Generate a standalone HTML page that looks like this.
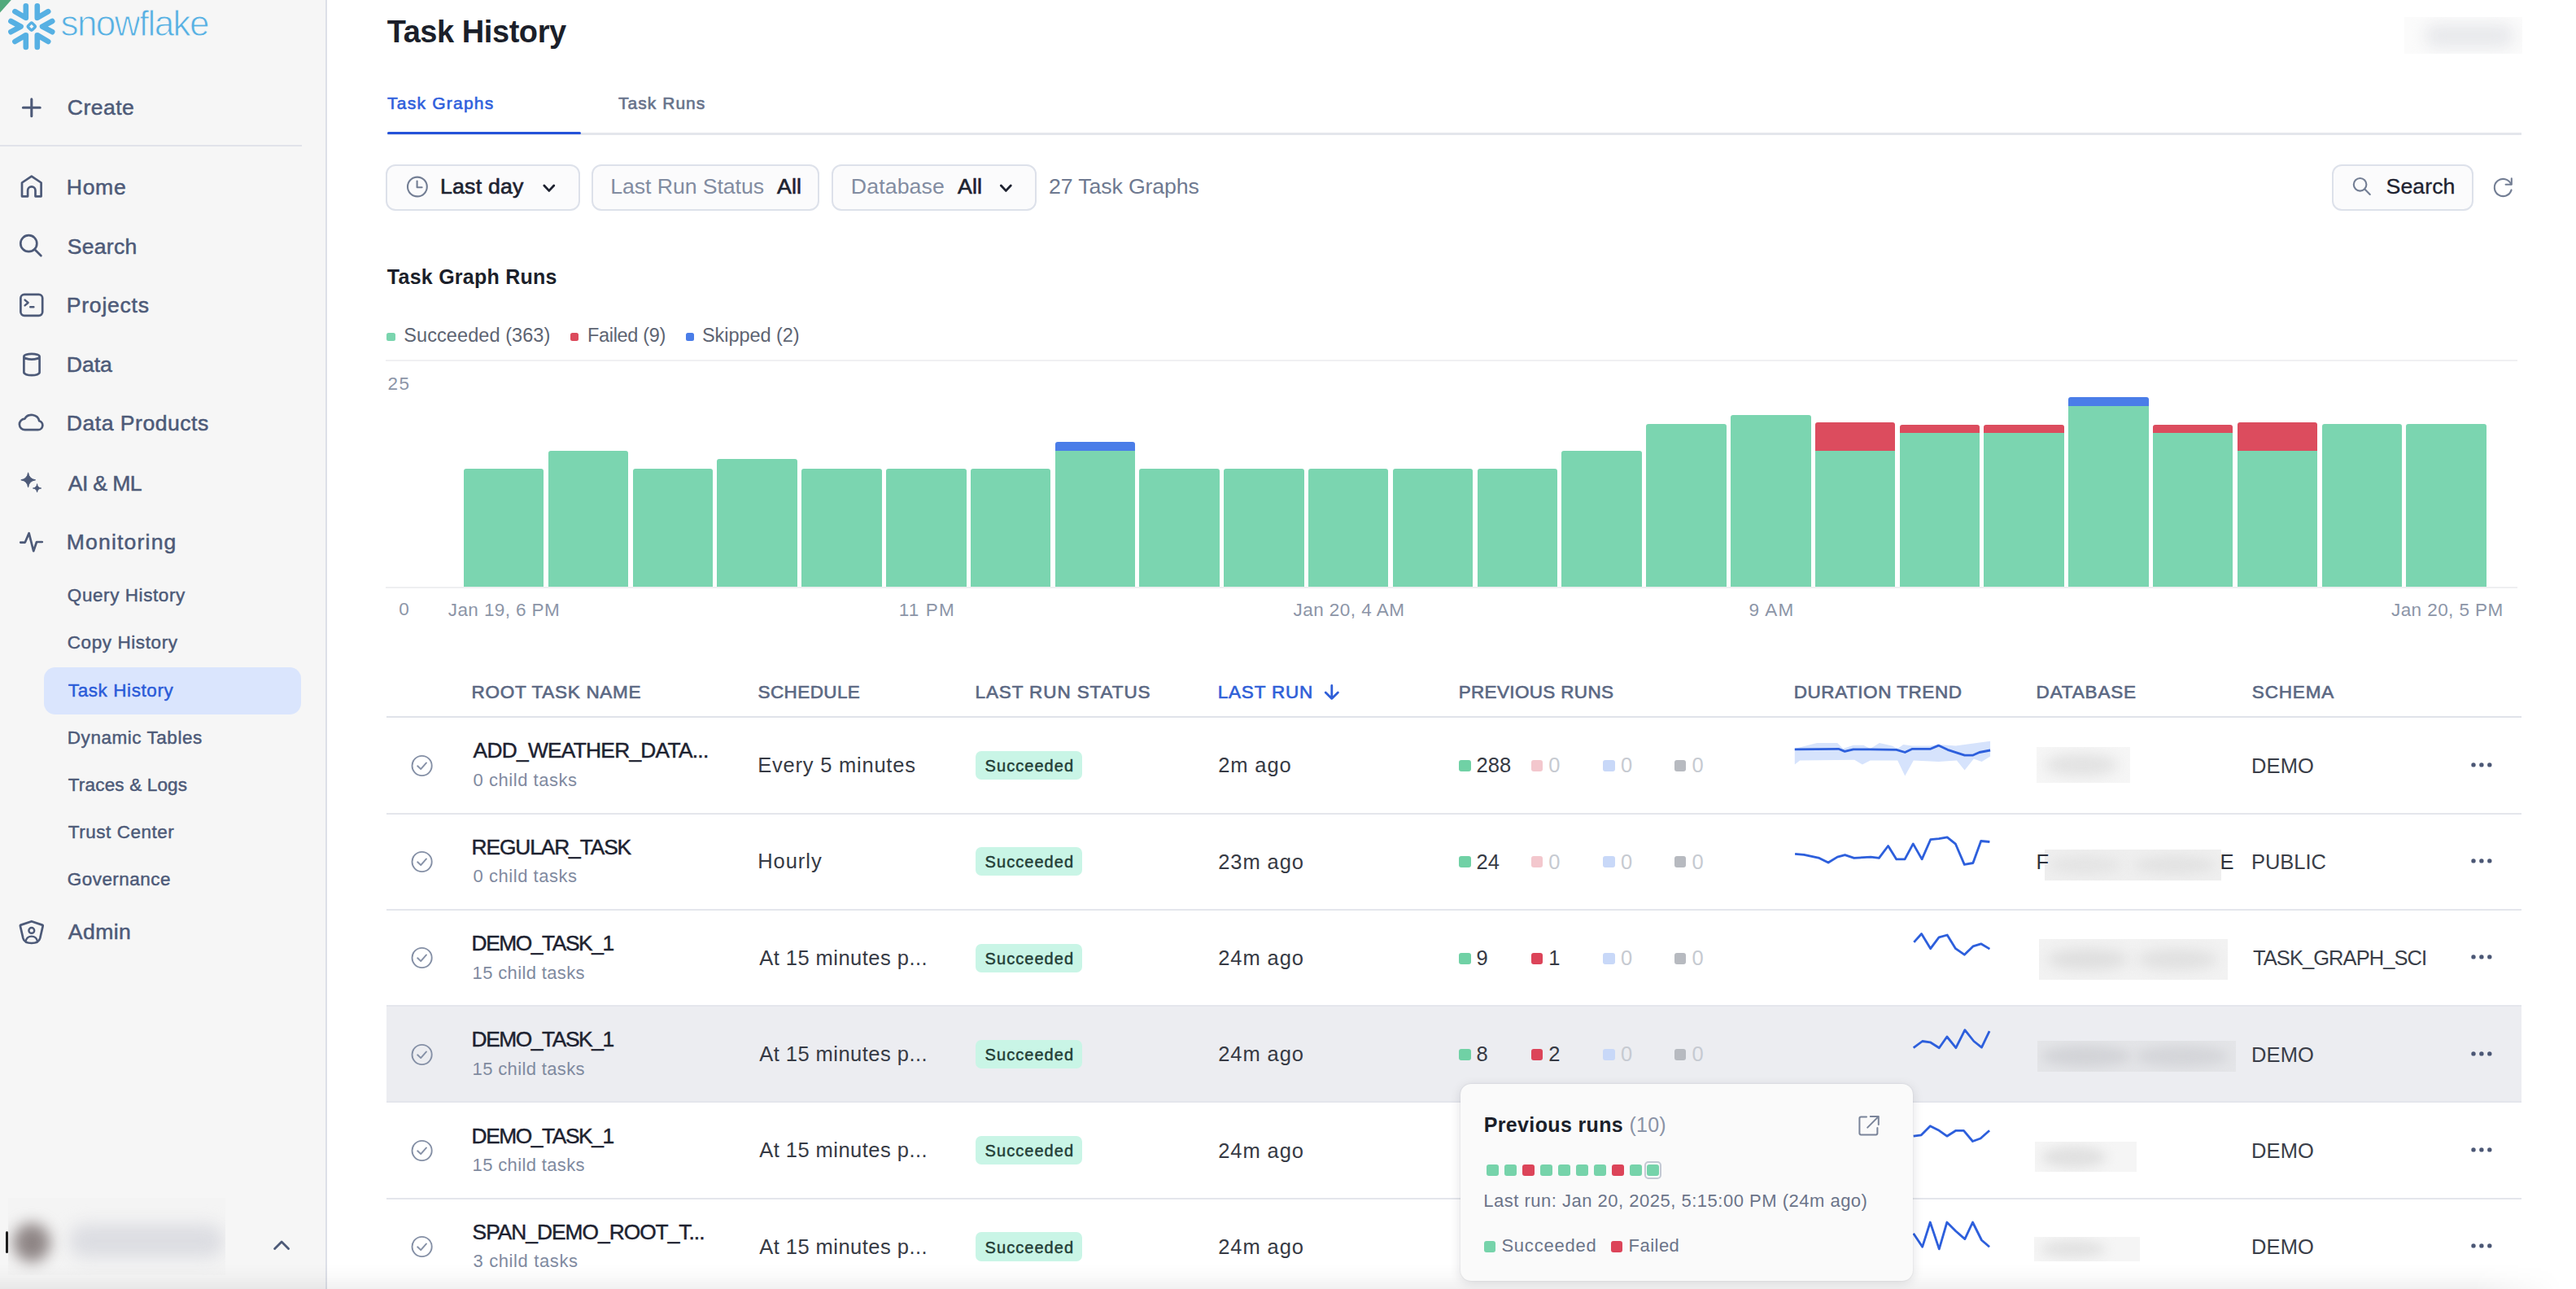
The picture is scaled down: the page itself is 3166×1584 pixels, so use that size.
<!DOCTYPE html>
<html><head><meta charset="utf-8"><style>
html,body{margin:0;padding:0;width:3166px;height:1584px;overflow:hidden;background:#fff;}
body{position:relative;font-family:"Liberation Sans",sans-serif;}
.t{position:absolute;white-space:nowrap;line-height:1.117;}
</style></head><body>
<div style="position:absolute;left:0.00px;top:0.00px;width:400.00px;height:1584.00px;background:#f6f6f6;"></div><div style="position:absolute;left:400.00px;top:0.00px;width:2.00px;height:1584.00px;background:#dde0e8;"></div><div style="position:absolute;left:0.00px;top:177.70px;width:371.00px;height:2.00px;background:#e1e3ea;"></div><div style="position:absolute;left:54.00px;top:820.00px;width:316.30px;height:57.50px;background:#dae5fd;border-radius:14px;"></div><div style="position:absolute;left:10px;top:1472px;width:267px;height:95px;background:#f4f4f4;overflow:hidden;"><div style="position:absolute;left:6px;top:31px;width:46px;height:48px;border-radius:50%;background:#8e8585;filter:blur(9px);"></div><div style="position:absolute;left:75px;top:32px;width:190px;height:42px;border-radius:20px;background:#dcdde2;filter:blur(10px);"></div></div><div style="position:absolute;left:6.50px;top:1513.00px;width:3.00px;height:27.00px;background:#1d1d1d;border-radius:2px;filter:blur(0.5px);"></div><div style="position:absolute;left:2955px;top:20.5px;width:145px;height:45.5px;background:#fbfbfb;overflow:hidden;"><div style="position:absolute;left:25px;top:8px;width:110px;height:30px;border-radius:15px;background:#e8e9ec;filter:blur(9px);"></div></div><div style="position:absolute;left:476.00px;top:163.00px;width:2622.70px;height:3.00px;background:#e4e6ec;"></div><div style="position:absolute;left:476.00px;top:162.00px;width:238.00px;height:3.40px;background:#2452d9;border-radius:2px;"></div><div style="position:absolute;left:474.40px;top:202.00px;width:238.30px;height:57.20px;box-sizing:border-box;border:2px solid #dde1ea;border-radius:12px;background:#fbfbfc;"></div><div style="position:absolute;left:726.70px;top:202.00px;width:280.70px;height:57.20px;box-sizing:border-box;border:2px solid #dde1ea;border-radius:12px;background:#fbfbfc;"></div><div style="position:absolute;left:1022.00px;top:202.00px;width:251.70px;height:57.20px;box-sizing:border-box;border:2px solid #dde1ea;border-radius:12px;background:#fbfbfc;"></div><div style="position:absolute;left:2866.40px;top:202.00px;width:173.40px;height:57.20px;box-sizing:border-box;border:2px solid #dde1ea;border-radius:12px;background:#fbfbfc;"></div><div style="position:absolute;left:474.40px;top:442.00px;width:2620.00px;height:2.00px;background:#f0f0f2;"></div><div style="position:absolute;left:474.00px;top:721.00px;width:2620.00px;height:2.00px;background:#eeeff1;"></div><div style="position:absolute;left:475.00px;top:409.00px;width:10.60px;height:9.60px;background:#7ad5ae;border-radius:2.5px;"></div><div style="position:absolute;left:700.50px;top:409.00px;width:10.60px;height:9.60px;background:#dc4a5c;border-radius:2.5px;"></div><div style="position:absolute;left:842.50px;top:409.00px;width:10.60px;height:9.60px;background:#4a7de8;border-radius:2.5px;"></div><div style="position:absolute;left:570.00px;top:576.00px;width:98.00px;height:145.00px;background:#7bd5b0;border-radius:3px 3px 0 0;"></div><div style="position:absolute;left:674.00px;top:554.00px;width:98.00px;height:167.00px;background:#7bd5b0;border-radius:3px 3px 0 0;"></div><div style="position:absolute;left:778.00px;top:576.00px;width:98.00px;height:145.00px;background:#7bd5b0;border-radius:3px 3px 0 0;"></div><div style="position:absolute;left:881.00px;top:564.00px;width:99.00px;height:157.00px;background:#7bd5b0;border-radius:3px 3px 0 0;"></div><div style="position:absolute;left:985.00px;top:576.00px;width:99.00px;height:145.00px;background:#7bd5b0;border-radius:3px 3px 0 0;"></div><div style="position:absolute;left:1089.00px;top:576.00px;width:99.00px;height:145.00px;background:#7bd5b0;border-radius:3px 3px 0 0;"></div><div style="position:absolute;left:1193.00px;top:576.00px;width:98.00px;height:145.00px;background:#7bd5b0;border-radius:3px 3px 0 0;"></div><div style="position:absolute;left:1297.00px;top:543.00px;width:98.00px;height:13.00px;background:#4a7de8;border-radius:3px 3px 0 0;"></div><div style="position:absolute;left:1297.00px;top:554.00px;width:98.00px;height:167.00px;background:#7bd5b0;"></div><div style="position:absolute;left:1400.00px;top:576.00px;width:99.00px;height:145.00px;background:#7bd5b0;border-radius:3px 3px 0 0;"></div><div style="position:absolute;left:1504.00px;top:576.00px;width:99.00px;height:145.00px;background:#7bd5b0;border-radius:3px 3px 0 0;"></div><div style="position:absolute;left:1608.00px;top:576.00px;width:98.00px;height:145.00px;background:#7bd5b0;border-radius:3px 3px 0 0;"></div><div style="position:absolute;left:1712.00px;top:576.00px;width:98.00px;height:145.00px;background:#7bd5b0;border-radius:3px 3px 0 0;"></div><div style="position:absolute;left:1816.00px;top:576.00px;width:98.00px;height:145.00px;background:#7bd5b0;border-radius:3px 3px 0 0;"></div><div style="position:absolute;left:1919.00px;top:554.00px;width:99.00px;height:167.00px;background:#7bd5b0;border-radius:3px 3px 0 0;"></div><div style="position:absolute;left:2023.00px;top:521.00px;width:99.00px;height:200.00px;background:#7bd5b0;border-radius:3px 3px 0 0;"></div><div style="position:absolute;left:2127.00px;top:510.00px;width:99.00px;height:211.00px;background:#7bd5b0;border-radius:3px 3px 0 0;"></div><div style="position:absolute;left:2231.00px;top:519.00px;width:98.00px;height:37.00px;background:#dc4c5e;border-radius:3px 3px 0 0;"></div><div style="position:absolute;left:2231.00px;top:554.00px;width:98.00px;height:167.00px;background:#7bd5b0;"></div><div style="position:absolute;left:2335.00px;top:522.00px;width:98.00px;height:12.00px;background:#dc4c5e;border-radius:3px 3px 0 0;"></div><div style="position:absolute;left:2335.00px;top:532.00px;width:98.00px;height:189.00px;background:#7bd5b0;"></div><div style="position:absolute;left:2438.00px;top:522.00px;width:99.00px;height:12.00px;background:#dc4c5e;border-radius:3px 3px 0 0;"></div><div style="position:absolute;left:2438.00px;top:532.00px;width:99.00px;height:189.00px;background:#7bd5b0;"></div><div style="position:absolute;left:2542.00px;top:488.00px;width:99.00px;height:13.00px;background:#4a7de8;border-radius:3px 3px 0 0;"></div><div style="position:absolute;left:2542.00px;top:499.00px;width:99.00px;height:222.00px;background:#7bd5b0;"></div><div style="position:absolute;left:2646.00px;top:522.00px;width:98.00px;height:12.00px;background:#dc4c5e;border-radius:3px 3px 0 0;"></div><div style="position:absolute;left:2646.00px;top:532.00px;width:98.00px;height:189.00px;background:#7bd5b0;"></div><div style="position:absolute;left:2750.00px;top:519.00px;width:98.00px;height:37.00px;background:#dc4c5e;border-radius:3px 3px 0 0;"></div><div style="position:absolute;left:2750.00px;top:554.00px;width:98.00px;height:167.00px;background:#7bd5b0;"></div><div style="position:absolute;left:2854.00px;top:521.00px;width:98.00px;height:200.00px;background:#7bd5b0;border-radius:3px 3px 0 0;"></div><div style="position:absolute;left:2957.00px;top:521.00px;width:99.00px;height:200.00px;background:#7bd5b0;border-radius:3px 3px 0 0;"></div><div style="position:absolute;left:474.90px;top:1236.00px;width:2623.80px;height:119.00px;background:#ecedf1;"></div><div style="position:absolute;left:474.90px;top:880.00px;width:2623.80px;height:2.00px;background:#e0e3ea;"></div><div style="position:absolute;left:474.90px;top:998.50px;width:2623.80px;height:2.00px;background:#e4e6ec;"></div><div style="position:absolute;left:474.90px;top:1116.80px;width:2623.80px;height:2.00px;background:#e4e6ec;"></div><div style="position:absolute;left:474.90px;top:1235.10px;width:2623.80px;height:2.00px;background:#e4e6ec;"></div><div style="position:absolute;left:474.90px;top:1353.40px;width:2623.80px;height:2.00px;background:#e4e6ec;"></div><div style="position:absolute;left:474.90px;top:1471.70px;width:2623.80px;height:2.00px;background:#e4e6ec;"></div><div style="position:absolute;left:1198.50px;top:922.90px;width:131.00px;height:35.30px;background:#c9f5e6;border-radius:7px;"></div><div style="position:absolute;left:1793.00px;top:934.00px;width:14.60px;height:14.20px;background:#70d1a5;border-radius:3px;"></div><div style="position:absolute;left:1881.70px;top:934.00px;width:14.60px;height:14.20px;background:#f3c7cd;border-radius:3px;"></div><div style="position:absolute;left:1970.30px;top:934.00px;width:14.60px;height:14.20px;background:#c8d8f8;border-radius:3px;"></div><div style="position:absolute;left:2057.80px;top:934.00px;width:14.60px;height:14.20px;background:#b7bac0;border-radius:3px;"></div><div style="position:absolute;left:1198.50px;top:1041.20px;width:131.00px;height:35.30px;background:#c9f5e6;border-radius:7px;"></div><div style="position:absolute;left:1793.00px;top:1052.30px;width:14.60px;height:14.20px;background:#70d1a5;border-radius:3px;"></div><div style="position:absolute;left:1881.70px;top:1052.30px;width:14.60px;height:14.20px;background:#f3c7cd;border-radius:3px;"></div><div style="position:absolute;left:1970.30px;top:1052.30px;width:14.60px;height:14.20px;background:#c8d8f8;border-radius:3px;"></div><div style="position:absolute;left:2057.80px;top:1052.30px;width:14.60px;height:14.20px;background:#b7bac0;border-radius:3px;"></div><div style="position:absolute;left:1198.50px;top:1159.50px;width:131.00px;height:35.30px;background:#c9f5e6;border-radius:7px;"></div><div style="position:absolute;left:1793.00px;top:1170.60px;width:14.60px;height:14.20px;background:#70d1a5;border-radius:3px;"></div><div style="position:absolute;left:1881.70px;top:1170.60px;width:14.60px;height:14.20px;background:#dc4459;border-radius:3px;"></div><div style="position:absolute;left:1970.30px;top:1170.60px;width:14.60px;height:14.20px;background:#c8d8f8;border-radius:3px;"></div><div style="position:absolute;left:2057.80px;top:1170.60px;width:14.60px;height:14.20px;background:#b7bac0;border-radius:3px;"></div><div style="position:absolute;left:1198.50px;top:1277.80px;width:131.00px;height:35.30px;background:#c9f5e6;border-radius:7px;"></div><div style="position:absolute;left:1793.00px;top:1288.90px;width:14.60px;height:14.20px;background:#70d1a5;border-radius:3px;"></div><div style="position:absolute;left:1881.70px;top:1288.90px;width:14.60px;height:14.20px;background:#dc4459;border-radius:3px;"></div><div style="position:absolute;left:1970.30px;top:1288.90px;width:14.60px;height:14.20px;background:#c8d8f8;border-radius:3px;"></div><div style="position:absolute;left:2057.80px;top:1288.90px;width:14.60px;height:14.20px;background:#b7bac0;border-radius:3px;"></div><div style="position:absolute;left:1198.50px;top:1396.10px;width:131.00px;height:35.30px;background:#c9f5e6;border-radius:7px;"></div><div style="position:absolute;left:1198.50px;top:1514.40px;width:131.00px;height:35.30px;background:#c9f5e6;border-radius:7px;"></div><div style="position:absolute;left:2503.3px;top:918.0px;width:114.6px;height:43.6px;background:#f6f6f6;overflow:hidden;"><div style="position:absolute;left:10px;top:8px;width:90px;height:28px;background:#e2e2e2;border-radius:50%;filter:blur(8px);"></div></div><div style="position:absolute;left:2512.8px;top:1043.7px;width:217.2px;height:37.9px;background:#efefef;overflow:hidden;"><div style="position:absolute;left:5px;top:8px;width:90px;height:22px;background:#e4e4e4;border-radius:50%;filter:blur(7px);"></div><div style="position:absolute;left:110px;top:8px;width:100px;height:22px;background:#e2e2e2;border-radius:50%;filter:blur(7px);"></div></div><div style="position:absolute;left:2505.7px;top:1153.7px;width:232.7px;height:50.3px;background:#f2f2f2;overflow:hidden;"><div style="position:absolute;left:10px;top:12px;width:100px;height:26px;background:#dedede;border-radius:50%;filter:blur(8px);"></div><div style="position:absolute;left:120px;top:12px;width:100px;height:26px;background:#e0e0e0;border-radius:50%;filter:blur(8px);"></div></div><div style="position:absolute;left:2504.0px;top:1279.0px;width:244.0px;height:38.3px;background:#e4e5e8;overflow:hidden;"><div style="position:absolute;left:5px;top:6px;width:110px;height:26px;background:#d2d3d7;border-radius:50%;filter:blur(7px);"></div><div style="position:absolute;left:120px;top:6px;width:115px;height:26px;background:#d4d5d9;border-radius:50%;filter:blur(7px);"></div></div><div style="position:absolute;left:2501.0px;top:1402.6px;width:125.4px;height:37.1px;background:#f5f5f5;overflow:hidden;"><div style="position:absolute;left:8px;top:6px;width:80px;height:26px;background:#e0e0e0;border-radius:50%;filter:blur(7px);"></div></div><div style="position:absolute;left:2500.4px;top:1519.6px;width:129.6px;height:30.4px;background:#f5f5f5;overflow:hidden;"><div style="position:absolute;left:8px;top:4px;width:80px;height:22px;background:#e2e2e2;border-radius:50%;filter:blur(7px);"></div></div><div style="position:absolute;left:1795px;top:1332px;width:555.7px;height:242.4px;background:#fafafa;border-radius:13px;box-shadow:0 3px 14px rgba(20,25,40,0.13),0 0 2px rgba(20,25,40,0.12);z-index:70;"></div><div style="position:absolute;left:1827.3px;top:1430.7px;width:15px;height:14px;background:#76d3aa;border-radius:3px;z-index:80;"></div><div style="position:absolute;left:1849.2px;top:1430.7px;width:15px;height:14px;background:#76d3aa;border-radius:3px;z-index:80;"></div><div style="position:absolute;left:1871.1px;top:1430.7px;width:15px;height:14px;background:#dc4459;border-radius:3px;z-index:80;"></div><div style="position:absolute;left:1893.0px;top:1430.7px;width:15px;height:14px;background:#76d3aa;border-radius:3px;z-index:80;"></div><div style="position:absolute;left:1914.9px;top:1430.7px;width:15px;height:14px;background:#76d3aa;border-radius:3px;z-index:80;"></div><div style="position:absolute;left:1936.8px;top:1430.7px;width:15px;height:14px;background:#76d3aa;border-radius:3px;z-index:80;"></div><div style="position:absolute;left:1958.7px;top:1430.7px;width:15px;height:14px;background:#76d3aa;border-radius:3px;z-index:80;"></div><div style="position:absolute;left:1980.6px;top:1430.7px;width:15px;height:14px;background:#dc4459;border-radius:3px;z-index:80;"></div><div style="position:absolute;left:2002.5px;top:1430.7px;width:15px;height:14px;background:#76d3aa;border-radius:3px;z-index:80;"></div><div style="position:absolute;left:2024.4px;top:1430.7px;width:15px;height:14px;background:#76d3aa;border-radius:3px;z-index:80;"></div><div style="position:absolute;left:2020.6px;top:1426.5px;width:21.4px;height:22px;box-sizing:border-box;border:2px solid #c3c8d3;border-radius:5px;z-index:80;"></div><div style="position:absolute;left:1824.3px;top:1524.8px;width:14px;height:14.6px;background:#76d3aa;border-radius:3px;z-index:80;"></div><div style="position:absolute;left:1980.3px;top:1524.8px;width:14px;height:14.6px;background:#dc4459;border-radius:3px;z-index:80;"></div>
<div class="t" style="left:2502.5px;top:1045.02px;font-size:25.5px;color:#2e323c;">F</div><div class="t" style="left:2728.6px;top:1045.02px;font-size:25.5px;color:#2e323c;">E</div>
<div class="t" style="left:82.80px;top:118.33px;font-size:26.6px;color:#4d5a78;letter-spacing:0.434px;-webkit-text-stroke:0.5px #4d5a78;">Create</div><div class="t" style="left:81.80px;top:215.93px;font-size:26.6px;color:#4d5a78;letter-spacing:0.651px;-webkit-text-stroke:0.5px #4d5a78;">Home</div><div class="t" style="left:82.80px;top:288.73px;font-size:26.6px;color:#4d5a78;letter-spacing:0.246px;-webkit-text-stroke:0.5px #4d5a78;">Search</div><div class="t" style="left:81.80px;top:361.33px;font-size:26.6px;color:#4d5a78;letter-spacing:0.733px;-webkit-text-stroke:0.5px #4d5a78;">Projects</div><div class="t" style="left:81.80px;top:433.63px;font-size:26.6px;color:#4d5a78;letter-spacing:-0.061px;-webkit-text-stroke:0.5px #4d5a78;">Data</div><div class="t" style="left:81.80px;top:505.93px;font-size:26.6px;color:#4d5a78;letter-spacing:0.499px;-webkit-text-stroke:0.5px #4d5a78;">Data Products</div><div class="t" style="left:83.80px;top:579.73px;font-size:26.6px;color:#4d5a78;letter-spacing:-0.649px;-webkit-text-stroke:0.5px #4d5a78;">AI &amp; ML</div><div class="t" style="left:81.80px;top:651.93px;font-size:26.6px;color:#4d5a78;letter-spacing:1.158px;-webkit-text-stroke:0.5px #4d5a78;">Monitoring</div><div class="t" style="left:83.80px;top:1131.23px;font-size:26.6px;color:#4d5a78;letter-spacing:0.403px;-webkit-text-stroke:0.5px #4d5a78;">Admin</div><div class="t" style="left:82.80px;top:718.94px;font-size:22.5px;color:#4d5a78;letter-spacing:0.577px;-webkit-text-stroke:0.45px #4d5a78;">Query History</div><div class="t" style="left:82.80px;top:777.04px;font-size:22.5px;color:#4d5a78;letter-spacing:0.579px;-webkit-text-stroke:0.45px #4d5a78;">Copy History</div><div class="t" style="left:83.80px;top:835.64px;font-size:22.5px;color:#2a5bd8;letter-spacing:0.585px;-webkit-text-stroke:0.45px #2a5bd8;">Task History</div><div class="t" style="left:82.80px;top:893.64px;font-size:22.5px;color:#4d5a78;letter-spacing:0.542px;-webkit-text-stroke:0.45px #4d5a78;">Dynamic Tables</div><div class="t" style="left:83.80px;top:951.94px;font-size:22.5px;color:#4d5a78;letter-spacing:0.168px;-webkit-text-stroke:0.45px #4d5a78;">Traces &amp; Logs</div><div class="t" style="left:83.80px;top:1009.94px;font-size:22.5px;color:#4d5a78;letter-spacing:0.527px;-webkit-text-stroke:0.45px #4d5a78;">Trust Center</div><div class="t" style="left:82.80px;top:1068.14px;font-size:22.5px;color:#4d5a78;letter-spacing:0.449px;-webkit-text-stroke:0.45px #4d5a78;">Governance</div><div class="t" style="left:74.50px;top:4.18px;font-size:44px;color:#56b0e3;letter-spacing:-1.586px;-webkit-text-stroke:0.9px #f6f6f6;">snowflake</div><div class="t" style="left:475.70px;top:18.01px;font-size:38px;color:#1b1f2a;letter-spacing:-0.440px;font-weight:700;">Task History</div><div class="t" style="left:476.00px;top:115.00px;font-size:21px;color:#2f5fdc;letter-spacing:1.232px;-webkit-text-stroke:0.6px #2f5fdc;">Task Graphs</div><div class="t" style="left:760.00px;top:115.00px;font-size:21px;color:#66728a;letter-spacing:1.033px;-webkit-text-stroke:0.6px #66728a;">Task Runs</div><div class="t" style="left:541.00px;top:214.54px;font-size:26.7px;color:#1e2230;letter-spacing:0.208px;-webkit-text-stroke:0.65px #1e2230;">Last day</div><div class="t" style="left:750.30px;top:215.24px;font-size:26.7px;color:#828ca1;letter-spacing:-0.082px;">Last Run Status</div><div class="t" style="left:955.00px;top:215.24px;font-size:26.7px;color:#1e2230;letter-spacing:0.135px;-webkit-text-stroke:0.65px #1e2230;">All</div><div class="t" style="left:1045.80px;top:215.24px;font-size:26.7px;color:#828ca1;letter-spacing:0.114px;">Database</div><div class="t" style="left:1177.00px;top:215.24px;font-size:26.7px;color:#1e2230;letter-spacing:0.135px;-webkit-text-stroke:0.65px #1e2230;">All</div><div class="t" style="left:1289.00px;top:215.24px;font-size:26.7px;color:#6e7990;letter-spacing:-0.120px;">27 Task Graphs</div><div class="t" style="left:2932.50px;top:215.14px;font-size:26.7px;color:#1e2230;letter-spacing:0.077px;-webkit-text-stroke:0.3px #1e2230;">Search</div><div class="t" style="left:475.80px;top:327.38px;font-size:25px;color:#1b1f2a;letter-spacing:0.255px;font-weight:700;">Task Graph Runs</div><div class="t" style="left:496.30px;top:399.33px;font-size:23.5px;color:#5d6472;letter-spacing:0.075px;">Succeeded (363)</div><div class="t" style="left:722.00px;top:399.33px;font-size:23.5px;color:#5d6472;letter-spacing:-0.314px;">Failed (9)</div><div class="t" style="left:863.00px;top:399.33px;font-size:23.5px;color:#5d6472;letter-spacing:-0.055px;">Skipped (2)</div><div class="t" style="left:476.50px;top:458.64px;font-size:22.5px;color:#8c95a7;letter-spacing:1.587px;">25</div><div class="t" style="left:490.30px;top:736.04px;font-size:22.5px;color:#8c95a7;letter-spacing:0.000px;">0</div><div class="t" style="left:550.80px;top:736.64px;font-size:22.5px;color:#8c95a7;letter-spacing:0.397px;">Jan 19, 6 PM</div><div class="t" style="left:1104.80px;top:736.64px;font-size:22.5px;color:#8c95a7;letter-spacing:1.146px;">11 PM</div><div class="t" style="left:1589.50px;top:736.64px;font-size:22.5px;color:#8c95a7;letter-spacing:0.461px;">Jan 20, 4 AM</div><div class="t" style="left:2149.60px;top:736.64px;font-size:22.5px;color:#8c95a7;letter-spacing:1.109px;">9 AM</div><div class="t" style="left:2939.00px;top:736.64px;font-size:22.5px;color:#8c95a7;letter-spacing:0.425px;">Jan 20, 5 PM</div><div class="t" style="left:579.60px;top:838.44px;font-size:22.5px;color:#5b6883;letter-spacing:0.701px;-webkit-text-stroke:0.65px #5b6883;">ROOT TASK NAME</div><div class="t" style="left:931.60px;top:838.44px;font-size:22.5px;color:#5b6883;letter-spacing:0.382px;-webkit-text-stroke:0.65px #5b6883;">SCHEDULE</div><div class="t" style="left:1198.50px;top:838.44px;font-size:22.5px;color:#5b6883;letter-spacing:0.898px;-webkit-text-stroke:0.65px #5b6883;">LAST RUN STATUS</div><div class="t" style="left:1496.70px;top:838.44px;font-size:22.5px;color:#2f5fd8;letter-spacing:0.826px;-webkit-text-stroke:0.65px #2f5fd8;">LAST RUN</div><div class="t" style="left:1792.70px;top:838.44px;font-size:22.5px;color:#5b6883;letter-spacing:0.335px;-webkit-text-stroke:0.65px #5b6883;">PREVIOUS RUNS</div><div class="t" style="left:2204.80px;top:838.44px;font-size:22.5px;color:#5b6883;letter-spacing:0.536px;-webkit-text-stroke:0.65px #5b6883;">DURATION TREND</div><div class="t" style="left:2502.60px;top:838.44px;font-size:22.5px;color:#5b6883;letter-spacing:0.830px;-webkit-text-stroke:0.65px #5b6883;">DATABASE</div><div class="t" style="left:2767.80px;top:838.44px;font-size:22.5px;color:#5b6883;letter-spacing:0.849px;-webkit-text-stroke:0.65px #5b6883;">SCHEMA</div><div class="t" style="left:581.60px;top:908.40px;font-size:26.3px;color:#1d2230;letter-spacing:-0.714px;-webkit-text-stroke:0.45px #1d2230;">ADD_WEATHER_DATA...</div><div class="t" style="left:581.60px;top:946.99px;font-size:22px;color:#7f8a9f;letter-spacing:0.537px;">0 child tasks</div><div class="t" style="left:931.20px;top:926.02px;font-size:25.5px;color:#363a44;letter-spacing:0.781px;">Every 5 minutes</div><div class="t" style="left:1210.60px;top:930.00px;font-size:20px;color:#233d36;letter-spacing:1.043px;-webkit-text-stroke:0.45px #233d36;">Succeeded</div><div class="t" style="left:1497.20px;top:926.32px;font-size:25.5px;color:#363a44;letter-spacing:0.886px;">2m ago</div><div class="t" style="left:1814.60px;top:926.32px;font-size:25.5px;color:#363a44;letter-spacing:0.000px;">288</div><div class="t" style="left:1903.30px;top:926.32px;font-size:25.5px;color:#c6cad1;letter-spacing:0.000px;">0</div><div class="t" style="left:1991.90px;top:926.32px;font-size:25.5px;color:#c6cad1;letter-spacing:0.000px;">0</div><div class="t" style="left:2079.40px;top:926.32px;font-size:25.5px;color:#c6cad1;letter-spacing:0.000px;">0</div><div class="t" style="left:2767.00px;top:926.72px;font-size:25.5px;color:#3a3e48;letter-spacing:0.112px;">DEMO</div><div class="t" style="left:579.60px;top:1026.70px;font-size:26.3px;color:#1d2230;letter-spacing:-1.086px;-webkit-text-stroke:0.45px #1d2230;">REGULAR_TASK</div><div class="t" style="left:581.60px;top:1065.29px;font-size:22px;color:#7f8a9f;letter-spacing:0.537px;">0 child tasks</div><div class="t" style="left:931.20px;top:1044.32px;font-size:25.5px;color:#363a44;letter-spacing:0.953px;">Hourly</div><div class="t" style="left:1210.60px;top:1048.30px;font-size:20px;color:#233d36;letter-spacing:1.043px;-webkit-text-stroke:0.45px #233d36;">Succeeded</div><div class="t" style="left:1497.20px;top:1044.62px;font-size:25.5px;color:#363a44;letter-spacing:0.924px;">23m ago</div><div class="t" style="left:1814.60px;top:1044.62px;font-size:25.5px;color:#363a44;letter-spacing:0.000px;">24</div><div class="t" style="left:1903.30px;top:1044.62px;font-size:25.5px;color:#c6cad1;letter-spacing:0.000px;">0</div><div class="t" style="left:1991.90px;top:1044.62px;font-size:25.5px;color:#c6cad1;letter-spacing:0.000px;">0</div><div class="t" style="left:2079.40px;top:1044.62px;font-size:25.5px;color:#c6cad1;letter-spacing:0.000px;">0</div><div class="t" style="left:2767.00px;top:1045.02px;font-size:25.5px;color:#3a3e48;letter-spacing:-0.040px;">PUBLIC</div><div class="t" style="left:579.60px;top:1145.00px;font-size:26.3px;color:#1d2230;letter-spacing:-1.407px;-webkit-text-stroke:0.45px #1d2230;">DEMO_TASK_1</div><div class="t" style="left:580.60px;top:1183.59px;font-size:22px;color:#7f8a9f;letter-spacing:0.362px;">15 child tasks</div><div class="t" style="left:933.20px;top:1162.62px;font-size:25.5px;color:#363a44;letter-spacing:0.468px;">At 15 minutes p...</div><div class="t" style="left:1210.60px;top:1166.60px;font-size:20px;color:#233d36;letter-spacing:1.043px;-webkit-text-stroke:0.45px #233d36;">Succeeded</div><div class="t" style="left:1497.20px;top:1162.92px;font-size:25.5px;color:#363a44;letter-spacing:0.924px;">24m ago</div><div class="t" style="left:1814.60px;top:1162.92px;font-size:25.5px;color:#363a44;letter-spacing:0.000px;">9</div><div class="t" style="left:1903.30px;top:1162.92px;font-size:25.5px;color:#363a44;letter-spacing:0.000px;">1</div><div class="t" style="left:1991.90px;top:1162.92px;font-size:25.5px;color:#c6cad1;letter-spacing:0.000px;">0</div><div class="t" style="left:2079.40px;top:1162.92px;font-size:25.5px;color:#c6cad1;letter-spacing:0.000px;">0</div><div class="t" style="left:2769.00px;top:1163.32px;font-size:25.5px;color:#3a3e48;letter-spacing:-0.937px;width:215px;overflow:hidden;">TASK_GRAPH_SCI</div><div class="t" style="left:579.60px;top:1263.30px;font-size:26.3px;color:#1d2230;letter-spacing:-1.407px;-webkit-text-stroke:0.45px #1d2230;">DEMO_TASK_1</div><div class="t" style="left:580.60px;top:1301.89px;font-size:22px;color:#7f8a9f;letter-spacing:0.362px;">15 child tasks</div><div class="t" style="left:933.20px;top:1280.92px;font-size:25.5px;color:#363a44;letter-spacing:0.468px;">At 15 minutes p...</div><div class="t" style="left:1210.60px;top:1284.90px;font-size:20px;color:#233d36;letter-spacing:1.043px;-webkit-text-stroke:0.45px #233d36;">Succeeded</div><div class="t" style="left:1497.20px;top:1281.22px;font-size:25.5px;color:#363a44;letter-spacing:0.924px;">24m ago</div><div class="t" style="left:1814.60px;top:1281.22px;font-size:25.5px;color:#363a44;letter-spacing:0.000px;">8</div><div class="t" style="left:1903.30px;top:1281.22px;font-size:25.5px;color:#363a44;letter-spacing:0.000px;">2</div><div class="t" style="left:1991.90px;top:1281.22px;font-size:25.5px;color:#c6cad1;letter-spacing:0.000px;">0</div><div class="t" style="left:2079.40px;top:1281.22px;font-size:25.5px;color:#c6cad1;letter-spacing:0.000px;">0</div><div class="t" style="left:2767.00px;top:1281.62px;font-size:25.5px;color:#3a3e48;letter-spacing:0.112px;">DEMO</div><div class="t" style="left:579.60px;top:1381.60px;font-size:26.3px;color:#1d2230;letter-spacing:-1.407px;-webkit-text-stroke:0.45px #1d2230;">DEMO_TASK_1</div><div class="t" style="left:580.60px;top:1420.19px;font-size:22px;color:#7f8a9f;letter-spacing:0.362px;">15 child tasks</div><div class="t" style="left:933.20px;top:1399.22px;font-size:25.5px;color:#363a44;letter-spacing:0.468px;">At 15 minutes p...</div><div class="t" style="left:1210.60px;top:1403.20px;font-size:20px;color:#233d36;letter-spacing:1.043px;-webkit-text-stroke:0.45px #233d36;">Succeeded</div><div class="t" style="left:1497.20px;top:1399.52px;font-size:25.5px;color:#363a44;letter-spacing:0.924px;">24m ago</div><div class="t" style="left:2767.00px;top:1399.92px;font-size:25.5px;color:#3a3e48;letter-spacing:0.112px;">DEMO</div><div class="t" style="left:580.60px;top:1499.90px;font-size:26.3px;color:#1d2230;letter-spacing:-0.975px;-webkit-text-stroke:0.45px #1d2230;">SPAN_DEMO_ROOT_T...</div><div class="t" style="left:581.60px;top:1538.49px;font-size:22px;color:#7f8a9f;letter-spacing:0.612px;">3 child tasks</div><div class="t" style="left:933.20px;top:1517.52px;font-size:25.5px;color:#363a44;letter-spacing:0.468px;">At 15 minutes p...</div><div class="t" style="left:1210.60px;top:1521.50px;font-size:20px;color:#233d36;letter-spacing:1.043px;-webkit-text-stroke:0.45px #233d36;">Succeeded</div><div class="t" style="left:1497.20px;top:1517.82px;font-size:25.5px;color:#363a44;letter-spacing:0.924px;">24m ago</div><div class="t" style="left:2767.00px;top:1518.22px;font-size:25.5px;color:#3a3e48;letter-spacing:0.112px;">DEMO</div><div class="t" style="left:1823.70px;top:1369.38px;font-size:25px;color:#1b1f2a;letter-spacing:0.357px;font-weight:700;z-index:80;">Previous runs</div><div class="t" style="left:2002.60px;top:1369.38px;font-size:25px;color:#8a93a6;letter-spacing:0.156px;z-index:80;">(10)</div><div class="t" style="left:1823.30px;top:1463.59px;font-size:22px;color:#6b7489;letter-spacing:0.502px;z-index:80;">Last run: Jan 20, 2025, 5:15:00 PM (24m ago)</div><div class="t" style="left:1845.40px;top:1519.49px;font-size:22px;color:#6b7489;letter-spacing:0.781px;z-index:80;">Succeeded</div><div class="t" style="left:2001.50px;top:1519.49px;font-size:22px;color:#6b7489;letter-spacing:0.483px;z-index:80;">Failed</div>
<svg style="position:absolute;left:500px;top:920.6px;overflow:visible;" width="40" height="40" viewBox="500 920.6 40 40"><circle cx="518.6" cy="940.6" r="12.1" fill="none" stroke="#8590a6" stroke-width="1.9"/><polyline points="513.2,940.9 517.2,944.7 524,937.0" fill="none" stroke="#8590a6" stroke-width="1.9" stroke-linecap="round" stroke-linejoin="round"/></svg><svg style="position:absolute;left:3030px;top:930.6px;overflow:visible;" width="40" height="20" viewBox="3030 930.6 40 20"><circle cx="3040" cy="939.5" r="2.7" fill="#4b5775"/><circle cx="3049.9" cy="939.5" r="2.7" fill="#4b5775"/><circle cx="3059.8" cy="939.5" r="2.7" fill="#4b5775"/></svg><svg style="position:absolute;left:500px;top:1038.9px;overflow:visible;" width="40" height="40" viewBox="500 1038.9 40 40"><circle cx="518.6" cy="1058.9" r="12.1" fill="none" stroke="#8590a6" stroke-width="1.9"/><polyline points="513.2,1059.2 517.2,1063.0 524,1055.3000000000002" fill="none" stroke="#8590a6" stroke-width="1.9" stroke-linecap="round" stroke-linejoin="round"/></svg><svg style="position:absolute;left:3030px;top:1048.9px;overflow:visible;" width="40" height="20" viewBox="3030 1048.9 40 20"><circle cx="3040" cy="1057.8000000000002" r="2.7" fill="#4b5775"/><circle cx="3049.9" cy="1057.8000000000002" r="2.7" fill="#4b5775"/><circle cx="3059.8" cy="1057.8000000000002" r="2.7" fill="#4b5775"/></svg><svg style="position:absolute;left:500px;top:1157.2px;overflow:visible;" width="40" height="40" viewBox="500 1157.2 40 40"><circle cx="518.6" cy="1177.2" r="12.1" fill="none" stroke="#8590a6" stroke-width="1.9"/><polyline points="513.2,1177.5 517.2,1181.3 524,1173.6000000000001" fill="none" stroke="#8590a6" stroke-width="1.9" stroke-linecap="round" stroke-linejoin="round"/></svg><svg style="position:absolute;left:3030px;top:1167.2px;overflow:visible;" width="40" height="20" viewBox="3030 1167.2 40 20"><circle cx="3040" cy="1176.1000000000001" r="2.7" fill="#4b5775"/><circle cx="3049.9" cy="1176.1000000000001" r="2.7" fill="#4b5775"/><circle cx="3059.8" cy="1176.1000000000001" r="2.7" fill="#4b5775"/></svg><svg style="position:absolute;left:500px;top:1275.5px;overflow:visible;" width="40" height="40" viewBox="500 1275.5 40 40"><circle cx="518.6" cy="1295.5" r="12.1" fill="none" stroke="#8590a6" stroke-width="1.9"/><polyline points="513.2,1295.8 517.2,1299.6 524,1291.9" fill="none" stroke="#8590a6" stroke-width="1.9" stroke-linecap="round" stroke-linejoin="round"/></svg><svg style="position:absolute;left:3030px;top:1285.5px;overflow:visible;" width="40" height="20" viewBox="3030 1285.5 40 20"><circle cx="3040" cy="1294.4" r="2.7" fill="#4b5775"/><circle cx="3049.9" cy="1294.4" r="2.7" fill="#4b5775"/><circle cx="3059.8" cy="1294.4" r="2.7" fill="#4b5775"/></svg><svg style="position:absolute;left:500px;top:1393.8px;overflow:visible;" width="40" height="40" viewBox="500 1393.8 40 40"><circle cx="518.6" cy="1413.8" r="12.1" fill="none" stroke="#8590a6" stroke-width="1.9"/><polyline points="513.2,1414.1 517.2,1417.8999999999999 524,1410.2" fill="none" stroke="#8590a6" stroke-width="1.9" stroke-linecap="round" stroke-linejoin="round"/></svg><svg style="position:absolute;left:3030px;top:1403.8px;overflow:visible;" width="40" height="20" viewBox="3030 1403.8 40 20"><circle cx="3040" cy="1412.7" r="2.7" fill="#4b5775"/><circle cx="3049.9" cy="1412.7" r="2.7" fill="#4b5775"/><circle cx="3059.8" cy="1412.7" r="2.7" fill="#4b5775"/></svg><svg style="position:absolute;left:500px;top:1512.1px;overflow:visible;" width="40" height="40" viewBox="500 1512.1 40 40"><circle cx="518.6" cy="1532.1" r="12.1" fill="none" stroke="#8590a6" stroke-width="1.9"/><polyline points="513.2,1532.3999999999999 517.2,1536.1999999999998 524,1528.5" fill="none" stroke="#8590a6" stroke-width="1.9" stroke-linecap="round" stroke-linejoin="round"/></svg><svg style="position:absolute;left:3030px;top:1522.1px;overflow:visible;" width="40" height="20" viewBox="3030 1522.1 40 20"><circle cx="3040" cy="1531.0" r="2.7" fill="#4b5775"/><circle cx="3049.9" cy="1531.0" r="2.7" fill="#4b5775"/><circle cx="3059.8" cy="1531.0" r="2.7" fill="#4b5775"/></svg><svg style="position:absolute;left:2190px;top:890px;overflow:visible;" width="270" height="80" viewBox="2190 890 270 80"><polygon points="2205.8,919.9 2233.1,912.9 2258.2,912.9 2265.2,919.9 2277.8,915.7 2290.3,915.7 2298.7,919.9 2309.9,912.9 2325.3,916.4 2332.2,919.9 2339.2,915.0 2350.4,916.4 2372.7,916.4 2383.9,915.0 2403.5,916.4 2446.1,910.8 2446.1,929.6 2435.6,935.9 2425.8,932.4 2414.6,946.4 2404.9,934.5 2382.5,935.9 2351.8,934.5 2341.3,953.4 2332.2,934.5 2298.7,934.5 2288.9,939.4 2279.2,933.8 2212.1,934.5 2205.8,939.4" fill="#d6e3fc"/><polyline points="2205.8,920.8 2259.6,920.3 2267.3,923.4 2277.8,920.8 2298.7,920.8 2330.8,921.3 2341.3,924.5 2350.4,920.3 2372.7,920.3 2382.5,916.1 2393.7,921.3 2414.6,928.2 2424.4,928.2 2432.8,924.5 2446.1,922.0" fill="none" stroke="#2d5fdc" stroke-width="2.8" stroke-linejoin="round"/></svg><svg style="position:absolute;left:2190px;top:1010px;overflow:visible;" width="270" height="80" viewBox="2190 1010 270 80"><polyline points="2206.1,1049.3 2217.2,1050.3 2235.9,1054.4 2247.0,1060.0 2258.2,1053.1 2267.5,1050.7 2278.7,1054.4 2299.2,1053.1 2309.4,1054.4 2320.6,1039.5 2330.8,1055.9 2341.1,1055.9 2351.3,1036.9 2362.1,1055.9 2372.7,1031.7 2383.0,1030.7 2393.2,1028.9 2403.5,1037.2 2414.3,1062.4 2424.9,1060.5 2434.7,1033.5 2445.4,1034.5" fill="none" stroke="#2d5fdc" stroke-width="2.8" stroke-linejoin="round"/></svg><svg style="position:absolute;left:2190px;top:1128px;overflow:visible;" width="270" height="80" viewBox="2190 1128 270 80"><polyline points="2352.3,1157.9 2361.6,1147.5 2372.7,1165.7 2383.0,1151.8 2393.2,1149.0 2403.5,1165.7 2414.3,1173.2 2424.9,1162.9 2434.7,1159.8 2445.4,1166.1" fill="none" stroke="#2d5fdc" stroke-width="2.8" stroke-linejoin="round"/></svg><svg style="position:absolute;left:2190px;top:1246px;overflow:visible;" width="270" height="100" viewBox="2190 1246 270 100"><polyline points="2351.7,1287.7 2362.7,1279.5 2372.3,1280.8 2383.3,1287.7 2392.9,1274.0 2403.9,1287.7 2414.9,1265.7 2425.9,1279.5 2435.5,1287.1 2445.1,1267.1" fill="none" stroke="#2d5fdc" stroke-width="2.8" stroke-linejoin="round"/></svg><svg style="position:absolute;left:2190px;top:1364px;overflow:visible;" width="270" height="100" viewBox="2190 1364 270 100"><polyline points="2351.7,1396.2 2361.3,1394.8 2372.3,1383.8 2383.3,1389.3 2392.9,1396.2 2403.9,1389.3 2413.5,1389.3 2424.5,1402.5 2434.1,1399.0 2445.1,1389.3" fill="none" stroke="#2d5fdc" stroke-width="2.8" stroke-linejoin="round"/></svg><svg style="position:absolute;left:2190px;top:1482px;overflow:visible;" width="270" height="100" viewBox="2190 1482 270 100"><polyline points="2351.7,1515.7 2362.7,1532.2 2372.3,1502.0 2383.3,1534.9 2392.9,1502.0 2403.9,1513.0 2414.9,1522.6 2424.5,1502.0 2435.5,1524.0 2445.1,1532.2" fill="none" stroke="#2d5fdc" stroke-width="2.8" stroke-linejoin="round"/></svg><svg style="position:absolute;left:0px;top:0px;overflow:visible;" width="402" height="1584" viewBox="0 0 402 1584"><path d="M28.4,132.3 H49.2 M38.8,121.9 V142.7" fill="none" stroke="#4d5a78" stroke-width="3.1" stroke-linecap="round" stroke-linejoin="round"/><path d="M27,241.3 V224.5 L38.8,216.6 L50.6,224.5 V241.3 H43.5 V234 A4.7,4.7 0 0 0 34.1,234 V241.3 Z" fill="none" stroke="#4d5a78" stroke-width="2.7" stroke-linecap="round" stroke-linejoin="round"/><circle cx="35.3" cy="299.2" r="10" fill="none" stroke="#4d5a78" stroke-width="2.7"/><path d="M42.6,306.5 L50.4,314.3" fill="none" stroke="#4d5a78" stroke-width="2.7" stroke-linecap="round" stroke-linejoin="round"/><rect x="25.4" y="361.8" width="26.8" height="26" rx="4.5" fill="none" stroke="#4d5a78" stroke-width="2.7"/><path d="M30.6,368.6 L34.6,372 L30.6,375.4 M37.2,377.2 H41.4" fill="none" stroke="#4d5a78" stroke-width="2.4" stroke-linecap="round" stroke-linejoin="round"/><path d="M29.4,438.2 A9.6,3.4 0 0 1 48.6,438.2 V457.6 A9.6,3.6 0 0 1 29.4,457.6 Z M29.4,438.2 A9.6,3.4 0 0 0 48.6,438.2" fill="none" stroke="#4d5a78" stroke-width="2.7" stroke-linecap="round" stroke-linejoin="round"/><path d="M31,528.2 H46.8 A5.6,5.6 0 0 0 48.2,517.2 A9.6,9.2 0 0 0 30.4,514.6 A6.8,6.8 0 0 0 31,528.2 Z" fill="none" stroke="#4d5a78" stroke-width="2.7" stroke-linecap="round" stroke-linejoin="round"/><path d="M34.6,580.8 Q35.6,588.6 43.6,589.8 Q35.6,591 34.6,598.8 Q33.6,591 25.8,589.8 Q33.6,588.6 34.6,580.8 Z" fill="#4d5a78" stroke="#4d5a78" stroke-width="1"/><path d="M45.6,594.6 Q46.1,599.4 50.8,600 Q46.1,600.6 45.6,605 Q45.1,600.6 40.4,600 Q45.1,599.4 45.6,594.6 Z" fill="#4d5a78" stroke="#4d5a78" stroke-width="0.8"/><path d="M25.2,666.6 H30.8 L35.6,655.2 L41.2,677.2 L45,666 H51.8" fill="none" stroke="#4d5a78" stroke-width="2.7" stroke-linecap="round" stroke-linejoin="round"/><path d="M38.8,1132.2 L51.8,1136.6 Q53,1137 52.6,1138.4 L49.2,1153 Q47.6,1159 38.8,1159 Q30,1159 28.4,1153 L25,1138.4 Q24.6,1137 25.8,1136.6 Z" fill="none" stroke="#4d5a78" stroke-width="2.7" stroke-linecap="round" stroke-linejoin="round"/><circle cx="38.8" cy="1143.4" r="3.4" fill="none" stroke="#4d5a78" stroke-width="2.4"/><path d="M31.6,1156.4 Q33,1150.6 38.8,1150.6 Q44.6,1150.6 46,1156.4" fill="none" stroke="#4d5a78" stroke-width="2.4" stroke-linecap="round" stroke-linejoin="round"/><path d="M337.6,1534.6 L346.1,1526 L354.6,1534.6" fill="none" stroke="#4d5a78" stroke-width="2.8" stroke-linecap="round" stroke-linejoin="round"/></svg><svg style="position:absolute;left:0px;top:0px;overflow:visible;" width="80" height="70" viewBox="0 0 80 70"><path d="M31.8,7.2 V22 L18.4,14.2" fill="none" stroke="#56b0e3" stroke-width="6.6" stroke-linecap="round" stroke-linejoin="round"/><path d="M45.8,7.2 V22 L59.2,14.2" fill="none" stroke="#56b0e3" stroke-width="6.6" stroke-linecap="round" stroke-linejoin="round"/><path d="M31.8,58 V43.2 L18.4,51" fill="none" stroke="#56b0e3" stroke-width="6.6" stroke-linecap="round" stroke-linejoin="round"/><path d="M45.8,58 V43.2 L59.2,51" fill="none" stroke="#56b0e3" stroke-width="6.6" stroke-linecap="round" stroke-linejoin="round"/><path d="M13.4,26 L25.6,32.6 L13.4,39.2" fill="none" stroke="#56b0e3" stroke-width="6.6" stroke-linecap="round" stroke-linejoin="round"/><path d="M64.2,26 L52,32.6 L64.2,39.2" fill="none" stroke="#56b0e3" stroke-width="6.6" stroke-linecap="round" stroke-linejoin="round"/><rect x="35.2" y="29" width="7.2" height="7.2" rx="1.6" transform="rotate(45 38.8 32.6)" fill="none" stroke="#56b0e3" stroke-width="3.4"/><polygon points="0,0 13.8,0 0,15.6" fill="#52a97c"/></svg><svg style="position:absolute;left:402px;top:0px;overflow:visible;" width="2764" height="1584" viewBox="402 0 2764 1584"><circle cx="512.9" cy="229.5" r="11.9" fill="none" stroke="#737e94" stroke-width="2.1"/><path d="M512.6,222.6 V230.2 H518.6" fill="none" stroke="#737e94" stroke-width="2.1" stroke-linecap="round" stroke-linejoin="round"/><path d="M668.8,228 L674.8,234.4 L680.8,228" fill="none" stroke="#1e2230" stroke-width="2.8" stroke-linecap="round" stroke-linejoin="round"/><path d="M1230.3,228 L1236.3,234.4 L1242.3,228" fill="none" stroke="#1e2230" stroke-width="2.8" stroke-linecap="round" stroke-linejoin="round"/><circle cx="2900.6" cy="226.8" r="7.8" fill="none" stroke="#737e94" stroke-width="2.1"/><path d="M2906.4,232.6 L2912.8,239" fill="none" stroke="#737e94" stroke-width="2.1" stroke-linecap="round" stroke-linejoin="round"/><path d="M3086.2,226.4 A10.6,10.6 0 1 0 3086.6,233.4" fill="none" stroke="#737e94" stroke-width="2.1" stroke-linecap="round" stroke-linejoin="round"/><path d="M3086.8,219.4 V226.8 H3079.6" fill="none" stroke="#737e94" stroke-width="2.1" stroke-linecap="round" stroke-linejoin="round"/><path d="M1636.8,842.4 V858.4 M1629.2,851 L1636.8,858.6 L1644.4,851" fill="none" stroke="#2f5fd8" stroke-width="2.8" stroke-linecap="round" stroke-linejoin="round"/></svg><svg style="position:absolute;left:2270px;top:1360px;overflow:visible;z-index:80;" width="60" height="50" viewBox="2270 1360 60 50"><path d="M2294,1372.6 H2287.2 Q2285.4,1372.6 2285.4,1374.4 V1392.6 Q2285.4,1394.4 2287.2,1394.4 H2305.6 Q2307.4,1394.4 2307.4,1392.6 V1386" fill="none" stroke="#7a8499" stroke-width="2" stroke-linecap="round" stroke-linejoin="round"/><path d="M2298.8,1372 H2308.8 V1382 M2308.4,1372.4 L2295.2,1385.6" fill="none" stroke="#7a8499" stroke-width="2" stroke-linecap="round" stroke-linejoin="round"/></svg>
<div style="position:absolute;left:0;top:1554px;width:3150px;height:30px;background:linear-gradient(180deg,rgba(0,0,0,0) 0%,rgba(0,0,0,0.02) 50%,rgba(0,0,0,0.055) 100%);-webkit-mask-image:linear-gradient(90deg,#000 0,#000 3040px,transparent 3150px);z-index:60;"></div>
</body></html>
